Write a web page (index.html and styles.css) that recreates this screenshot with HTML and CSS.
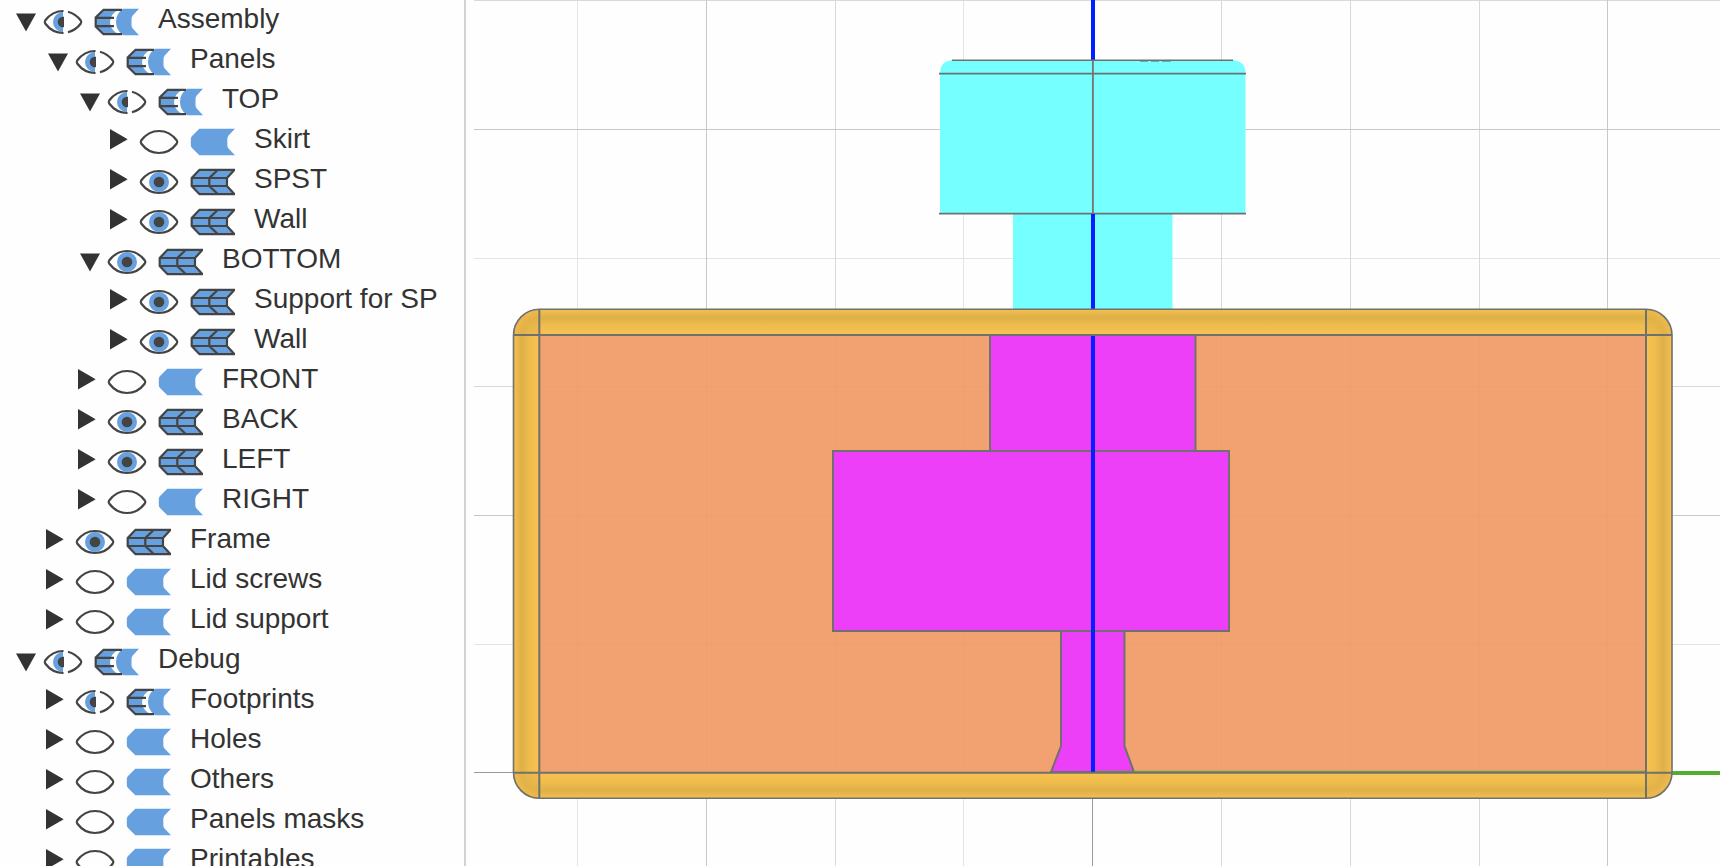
FILE: index.html
```html
<!DOCTYPE html>
<html lang="en">
<head>
<meta charset="utf-8">
<title>Assembly viewer</title>
<link rel="stylesheet" href="styles.css">
</head>
<body>
<svg class="defs" aria-hidden="true">
  <symbol id="open" viewBox="0 0 28 40"><path class="ink" d="M2 13.5H22L12 31.5Z"/></symbol>
  <symbol id="closed" viewBox="0 0 28 40"><path class="ink" d="M0 9V29.5L17.7 19.2Z"/></symbol>
  <symbol id="eye-off" viewBox="0 0 42 40"><path class="line" d="M3.2 20.500C8 14 14 11 21 11S34 14 38.800 20.500Q39.800 22 38.800 23.500C34 30 28 33 21 33S8 30 3.200 23.500Q2.200 22 3.200 20.500Z"/></symbol>
  <symbol id="eye-on" viewBox="0 0 42 40"><circle class="blue" cx="21" cy="22" r="10"/><circle class="dark" cx="21" cy="22" r="5.3"/><path class="line" d="M3.2 20.500C8 14 14 11 21 11S34 14 38.800 20.500Q39.800 22 38.800 23.500C34 30 28 33 21 33S8 30 3.200 23.500Q2.200 22 3.200 20.500Z"/></symbol>
  <symbol id="eye-mix" viewBox="0 0 42 40"><path class="blue" d="M21 12A10 10 0 0 0 21 32Z"/><path class="dark" d="M22 16.7H21A5.3 5.3 0 0 0 21 27.3H22Z"/><path class="line" d="M21.5 11C14 11 8 14 3.200 20.500Q2.200 22 3.200 23.500C8 30 14 33 21.5 33M26 11.700C31.500 13.200 35.500 16 38.800 20.500Q39.800 22 38.800 23.500C35.500 28 31.500 30.800 26 32.300"/></symbol>
  <symbol id="part-off" viewBox="0 0 46 40"><path class="blue" d="M9.300 8.800H45L38.500 15.500Q37.300 17 37.300 19V25Q37.300 27 38.500 28.500L45 35.200H9.300L2 28Q.8 26.500 .8 25V19Q.8 17.500 2 16Z"/></symbol>
  <symbol id="part-on" viewBox="0 0 46 40"><path class="blue" d="M9.300 9.500H45L37 18V26L45 34.500H9.300L1.700 26V18Z"/><path class="line" d="M45 9.800H9.500L1.700 18V26L9.500 34.200H45M44.500 9.800L37 18V26L44.500 34.200M1.700 18H37M1.700 26H37M28 9.800L19.300 18V26L28 34.200"/></symbol>
  <symbol id="part-mix" viewBox="0 0 46 40"><path class="blue" d="M9.300 9.500H25Q16 14 16 22T25 34.500H9.300L1.700 27V17ZM29 8.800H45L38.700 15.500Q37.500 17 37.500 19V25Q37.500 27 38.700 28.500L45 35.200H29Q22 30 22 22T29 8.800Z"/><path class="line" d="M28 9.800H9.500L1.700 17.500V26.500L9.500 34.200H28M1.700 17.800H20M1.700 26.200H20"/></symbol>
</svg>
<main class="app">
  <nav class="sidebar" aria-label="Model tree">
    <ul class="tree" id="tree"></ul>
  </nav>
  <section class="viewport" aria-label="Model view">
    <svg class="scene" viewBox="474 0 1246 866" preserveAspectRatio="xMidYMin slice" role="img" aria-label="Front view of the assembly">
      <defs>
        <linearGradient id="top" x1="0" y1="0" x2="0" y2="1"><stop offset="0" stop-color="#f5c150"/><stop offset=".33" stop-color="#deb048"/><stop offset=".65" stop-color="#f0bd4d"/><stop offset="1" stop-color="#f6c350"/></linearGradient>
        <linearGradient id="left" href="#top" x1="0" y1="0" x2="1" y2="0"/>
        <linearGradient id="bottom" href="#top" x1="0" y1="1" x2="0" y2="0"/>
        <linearGradient id="right" href="#top" x1="1" y1="0" x2="0" y2="0"/>
        <radialGradient id="corner" gradientUnits="userSpaceOnUse" cx="0" cy="0" r="26"><stop offset="0" stop-color="#f0bc4c"/><stop offset=".35" stop-color="#e9b84a"/><stop offset=".67" stop-color="#e2b248"/><stop offset="1" stop-color="#efbb4d"/></radialGradient>
      </defs>
      <g class="grid">
        <path stroke="#e4e4e4" d="M577.500 0V866M963.500 0V866M474 258.500H1720M474 644.500H1720"/>
        <path stroke="#d9d9d9" d="M835.500 0V866M1221.500 0V866M1350.500 0V866M1479.500 0V866M474 .5H1720M474 386.500H1720"/>
        <path stroke="#c8c8c8" d="M706.500 0V866M1607.500 0V866M474 129.500H1720M474 515.500H1720"/>
        <path stroke="#999" d="M1092.500 798V866M474 772.500H520"/>
      </g>
      <path fill="#52ad30" d="M1670 771H1720V775H1670Z"/>
      <path fill="#0020ff" d="M1091 0H1095V60H1091Z"/>
      <path fill="#75ffff" d="M940 214V74Q940 60 954 60H1231Q1245.500 60 1245.500 74V214ZM1013 213H1172.500V310H1013Z"/>
      <path class="edge" d="M952 60.300H1233M939 73.600H1246M939 213.600H1246"/>
      <path fill="none" stroke="#57b5b5" d="M1140 61.500H1148M1151 61.500H1159M1162 61.500H1171"/>
      <path fill="none" stroke="#7b7072" stroke-width="1.800" d="M1092.900 60V213"/>
      <path fill="#0020ff" d="M1091 214H1095V310H1091Z"/>
      <path fill="#f2a271" d="M539 335H1646V773H539Z"/>
      <path class="ghost" d="M577.500 335V772M706.500 335V772M835.500 335V772M963.500 335V772M1221.500 335V772M1350.500 335V772M1479.500 335V772M1607.500 335V772M539 386.500H1646M539 515.500H1646M539 644.500H1646"/>
      <path fill="url(#top)" d="M539 309H1646V335H539Z"/>
      <path fill="url(#bottom)" d="M539 773H1646V799H539Z"/>
      <path fill="url(#left)" d="M513 335H539V773H513Z"/>
      <path fill="url(#right)" d="M1646 335H1672V773H1646Z"/>
      <g fill="url(#corner)">
        <path transform="translate(539 335)" d="M0 0V-26A26 26 0 0 0 -26 0Z"/>
        <path transform="translate(1646 335)" d="M0 0V-26A26 26 0 0 1 26 0Z"/>
        <path transform="translate(539 773)" d="M0 0V26A26 26 0 0 1 -26 0Z"/>
        <path transform="translate(1646 773)" d="M0 0V26A26 26 0 0 0 26 0Z"/>
      </g>
      <path class="edge magenta" d="M990 335H1195.500V451H1229V631H1124.500V746L1134 772H1051L1061 746V631H833V451H990Z"/>
      <path class="edge bold" d="M990 451H1195.500M1061 631H1124.500"/>
      <path fill="#0020ff" d="M1091 335H1095V772H1091Z"/>
      <rect class="edge" x="513.500" y="309.300" width="1158.500" height="489" rx="26"/>
      <path class="edge bold" d="M539.300 309V798M1646 309V798M513 335H1672M513 772.800H1672"/>
      <path stroke="#5a9a38" d="M1095 771.300H1645"/>
    </svg>
  </section>
</main>
<script src="tree.js"></script>
</body>
</html>
```

FILE: styles.css
```css
* { box-sizing: border-box; }
body {
  margin: 0;
  background: #fefefe;
  color: #333;
  font: 28px/38px "Liberation Sans", Arial, Helvetica, sans-serif;
}
.defs { position: absolute; width: 0; height: 0; }
.app { display: flex; height: 100vh; overflow: hidden; }
.sidebar {
  flex: 0 0 466px;
  border-right: 2px solid #d3d3d3;
  overflow: hidden;
}
.tree, .branch { margin: 0; padding: 0; list-style: none; }
.tree { padding-left: 14px; }
.branch { padding-left: 32px; }
.row { display: flex; height: 40px; white-space: nowrap; }
.control {
  flex: none;
  padding: 0;
  border: 0;
  background: none;
  height: 40px;
  cursor: pointer;
}
.icon { display: block; width: 100%; height: 40px; }
.toggle { width: 28px; }
.eye { width: 42px; }
.part { width: 46px; margin: 0 18px 0 10px; }
.ink { fill: #333; }
.dark { fill: #444; }
.blue { fill: #66a0df; }
.line { fill: none; stroke: #444; stroke-width: 2.2; }
.viewport { flex: 1; min-width: 0; margin-left: 8px; }
.scene { display: block; width: 100%; height: 100%; }
.grid { fill: none; }
.ghost { fill: none; stroke: #e99b6c; stroke-opacity: 0.45; }
.edge { fill: none; stroke: #707070; stroke-width: 1.6; }
.edge.bold { stroke-width: 2; }
.edge.magenta { fill: #ec3ff7; stroke-width: 2; }
```

FILE: tree.js
```js
// [depth, name, state, expanded]
const items = [
  [0, "Assembly", "mix", true],
  [1, "Panels", "mix", true],
  [2, "TOP", "mix", true],
  [3, "Skirt", "off"],
  [3, "SPST", "on"],
  [3, "Wall", "on"],
  [2, "BOTTOM", "on", true],
  [3, "Support for SP", "on"],
  [3, "Wall", "on"],
  [2, "FRONT", "off"],
  [2, "BACK", "on"],
  [2, "LEFT", "on"],
  [2, "RIGHT", "off"],
  [1, "Frame", "on"],
  [1, "Lid screws", "off"],
  [1, "Lid support", "off"],
  [0, "Debug", "mix", true],
  [1, "Footprints", "mix"],
  [1, "Holes", "off"],
  [1, "Others", "off"],
  [1, "Panels masks", "off"],
  [1, "Printables", "off"]
];

const control = (kind, symbol, label) =>
  `<button type="button" class="control ${kind}" aria-label="${label}"><svg class="icon" aria-hidden="true"><use href="#${symbol}"/></svg></button>`;

const levels = [document.getElementById("tree")];
for (const [depth, name, state, expanded] of items) {
  const item = document.createElement("li");
  item.innerHTML = `<div class="row">${control("toggle", expanded ? "open" : "closed", "Expand " + name)}${control("eye", "eye-" + state, "Show faces of " + name)}${control("part", "part-" + state, "Show edges of " + name)}<span class="name">${name}</span></div>`;
  levels[depth].append(item);
  if (expanded) {
    const branch = document.createElement("ul");
    branch.className = "branch";
    item.append(branch);
    levels[depth + 1] = branch;
  }
}
```
